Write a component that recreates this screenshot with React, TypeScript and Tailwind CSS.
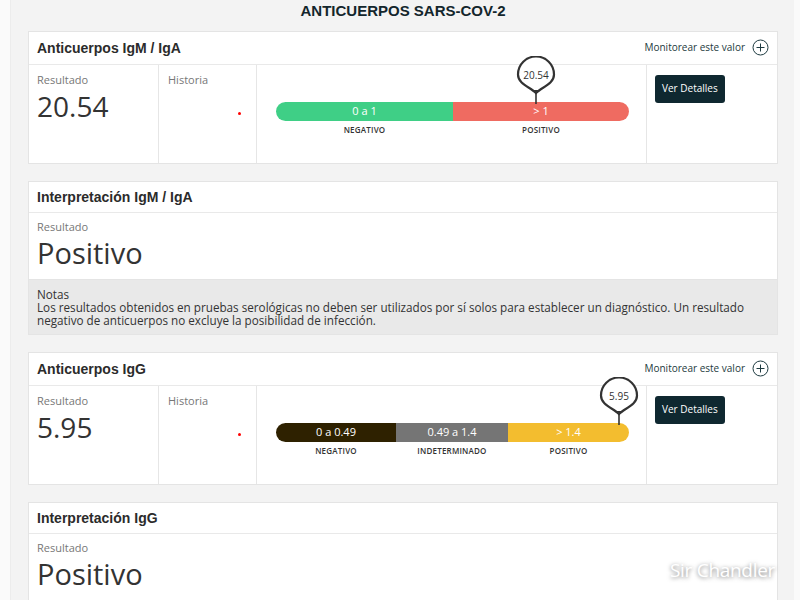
import { type ReactNode } from "react";

type Segment = { label: string; name: string; color: string; width: number };

const igmSegments: Segment[] = [
    { label: "0 a 1", name: "NEGATIVO", color: "bg-[#3fcf86]", width: 177 },
    { label: "> 1", name: "POSITIVO", color: "bg-[#ef6b61]", width: 176 },
];

const iggSegments: Segment[] = [
    { label: "0 a 0.49", name: "NEGATIVO", color: "bg-[#2e2100]", width: 120 },
    { label: "0.49 a 1.4", name: "INDETERMINADO", color: "bg-[#757575]", width: 112 },
    { label: "> 1.4", name: "POSITIVO", color: "bg-[#f3bd2f]", width: 121 },
];

function Pin({ value }: { value: string }) {
    return (
        <div className="relative h-[48px] w-[40px]">
            <svg width="40" height="48" viewBox="0 0 40 48" className="absolute inset-0">
                <path
                    d="M20 37 C14 31 2 28 2 18.5 A18 18 0 1 1 38 18.5 C38 28 26 31 20 37 Z"
                    fill="white"
                    stroke="#333"
                    strokeWidth="2.2"
                />
                <path d="M16 34 L24 34 L20 38.5 Z" fill="#333" />
                <line x1="20" y1="37" x2="20" y2="48" stroke="#333" strokeWidth="1.6" />
            </svg>
            <span className="absolute left-0 right-0 top-[12px] text-center text-[10px] text-[#333]">
                {value}
            </span>
        </div>
    );
}

function RangeBar({ segments, value, pinLeft }: { segments: Segment[]; value: string; pinLeft: number }) {
    return (
        <div className="relative mx-[19px] mt-[37px] w-[353px]">
            <div className="absolute -top-[46px]" style={{ left: pinLeft - 20 }}>
                <Pin value={value} />
            </div>
            <div className="flex h-[19px] overflow-hidden rounded-full">
                {segments.map((s) => (
                    <div
                        key={s.name}
                        className={`${s.color} flex items-center justify-center text-[11px] text-white`}
                        style={{ width: s.width }}
                    >
                        {s.label}
                    </div>
                ))}
            </div>
            <div className="mt-[3px] flex">
                {segments.map((s) => (
                    <div
                        key={s.name}
                        className="text-center text-[8px] font-semibold tracking-[0.2px] text-[#333]"
                        style={{ width: s.width }}
                    >
                        {s.name}
                    </div>
                ))}
            </div>
        </div>
    );
}

function Card({
    title,
    right,
    tall,
    children,
}: {
    title: string;
    right?: ReactNode;
    tall?: boolean;
    children: ReactNode;
}) {
    return (
        <div className="border border-[#e4e4e4] bg-white">
            <div
                className={`flex ${tall ? "h-[33px]" : "h-[31px]"} items-center justify-between border-b border-[#e9e9e9] px-[8px]`}
            >
                <h2 className="font-['Liberation_Sans',Arial,sans-serif] text-[14px] font-bold text-[#2b2b2b]">
                    {title}
                </h2>
                {right}
            </div>
            {children}
        </div>
    );
}

function Monitor() {
    return (
        <div className="-mt-[1px] flex items-center gap-[7px] text-[10px] font-medium text-[#1d3a40]">
            <span>Monitorear este valor</span>
            <svg width="17" height="17" viewBox="0 0 17 17" fill="none" stroke="#1d3a40" strokeWidth="1">
                <circle cx="8.5" cy="8.5" r="7.5" />
                <path d="M8.5 4.5 V12.5 M4.5 8.5 H12.5" />
            </svg>
        </div>
    );
}

function MeasureCard({
    title,
    value,
    segments,
    pinLeft,
}: {
    title: string;
    value: string;
    segments: Segment[];
    pinLeft: number;
}) {
    return (
        <Card title={title} right={<Monitor />} tall>
            <div className="grid h-[98px] grid-cols-[130px_98px_390px_1fr]">
                <div className="border-r border-[#e6e6e6] pl-[8px] pt-[7px]">
                    <div className="text-[11px] text-[#777]">Resultado</div>
                    <div className="-mt-[2px] text-[28px] leading-[38px] text-[#333]">{value}</div>
                </div>
                <div className="relative border-r border-[#e6e6e6] pl-[9px] pt-[7px]">
                    <div className="text-[11px] text-[#777]">Historia</div>
                    <span className="absolute left-[79px] top-[47px] h-[3px] w-[3px] rounded-full bg-[#ff0000]" />
                </div>
                <div className="border-r border-[#e6e6e6]">
                    <RangeBar segments={segments} value={value} pinLeft={pinLeft} />
                </div>
                <div className="pl-[8px] pt-[9px]">
                    <button className="h-[28px] rounded-[3px] bg-[#0f2830] px-[7px] text-[10px] font-medium text-white">
                        Ver Detalles
                    </button>
                </div>
            </div>
        </Card>
    );
}

function InterpretationCard({ title, notes }: { title: string; notes?: ReactNode }) {
    return (
        <Card title={title}>
            <div className="h-[66px] pl-[8px] pt-[6px]">
                <div className="text-[11px] text-[#777]">Resultado</div>
                <div className="-mt-[2px] text-[29px] leading-[38px] text-[#333]">Positivo</div>
            </div>
            {notes && (
                <div className="border-t border-[#e4e4e4] bg-[#e9e9e9] px-[8px] pb-[7px] pt-[8px] text-[11.7px] leading-[13px] text-[#333]">
                    <div>Notas</div>
                    <div>{notes}</div>
                </div>
            )}
        </Card>
    );
}

export default function App() {
    return (
        <div className="relative h-[600px] w-[800px] overflow-hidden bg-[#fafafa] font-['Open_Sans',sans-serif]">
            <div className="ml-[10px] h-full w-[784px] border-l border-[#ececec] bg-[#f3f3f3] pl-[17px] pr-[16px]">
                <h1 className="pt-[1px] text-center font-['Liberation_Sans',Arial,sans-serif] text-[15px] font-bold leading-[20px] text-[#13262c]">
                    ANTICUERPOS SARS-COV-2
                </h1>
                <div className="mt-[10px] flex flex-col gap-[17px]">
                    <MeasureCard title="Anticuerpos IgM / IgA" value="20.54" segments={igmSegments} pinLeft={260} />
                    <InterpretationCard
                        title="Interpretación IgM / IgA"
                        notes="Los resultados obtenidos en pruebas serológicas no deben ser utilizados por sí solos para establecer un diagnóstico. Un resultado negativo de anticuerpos no excluye la posibilidad de infección."
                    />
                    <MeasureCard title="Anticuerpos IgG" value="5.95" segments={iggSegments} pinLeft={343} />
                    <InterpretationCard title="Interpretación IgG" />
                </div>
            </div>
            <div className="absolute left-[670px] top-[556px] text-[19px] tracking-[-0.3px] text-white [text-shadow:0_1px_4px_rgba(0,0,0,0.55)]">
                Sir Chandler
            </div>
        </div>
    );
}
